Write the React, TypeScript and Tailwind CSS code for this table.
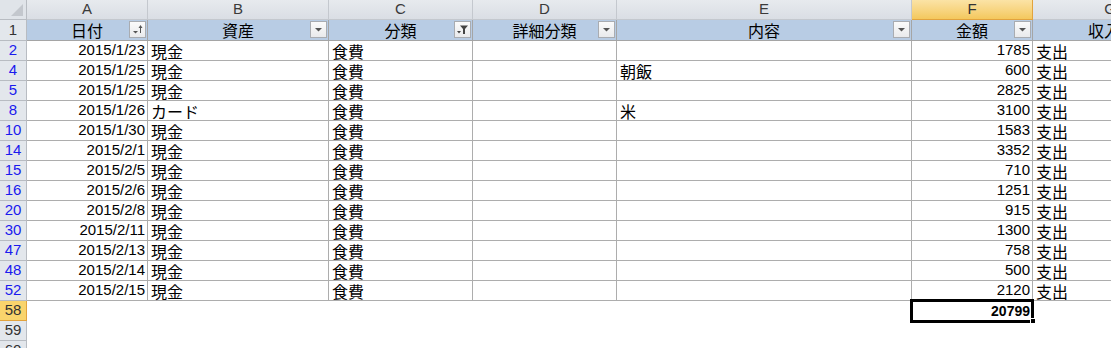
import React from 'react';

const COLS = 'grid grid-cols-[27px_121px_181px_144px_144px_295px_121px_1fr]';
const NUM = { fontFamily: '"Liberation Sans", Arial, sans-serif' };
const JP = { fontFamily: '"Noto Sans CJK JP", "Liberation Sans", sans-serif' };

type Row = { n: number; date: string; asset: string; cat: string; memo: string; amount: string };

const rows: Row[] = [
  { n: 2, date: '2015/1/23', asset: '現金', cat: '食費', memo: '', amount: '1785' },
  { n: 4, date: '2015/1/25', asset: '現金', cat: '食費', memo: '朝飯', amount: '600' },
  { n: 5, date: '2015/1/25', asset: '現金', cat: '食費', memo: '', amount: '2825' },
  { n: 8, date: '2015/1/26', asset: 'カード', cat: '食費', memo: '米', amount: '3100' },
  { n: 10, date: '2015/1/30', asset: '現金', cat: '食費', memo: '', amount: '1583' },
  { n: 14, date: '2015/2/1', asset: '現金', cat: '食費', memo: '', amount: '3352' },
  { n: 15, date: '2015/2/5', asset: '現金', cat: '食費', memo: '', amount: '710' },
  { n: 16, date: '2015/2/6', asset: '現金', cat: '食費', memo: '', amount: '1251' },
  { n: 20, date: '2015/2/8', asset: '現金', cat: '食費', memo: '', amount: '915' },
  { n: 30, date: '2015/2/11', asset: '現金', cat: '食費', memo: '', amount: '1300' },
  { n: 47, date: '2015/2/13', asset: '現金', cat: '食費', memo: '', amount: '758' },
  { n: 48, date: '2015/2/14', asset: '現金', cat: '食費', memo: '', amount: '500' },
  { n: 52, date: '2015/2/15', asset: '現金', cat: '食費', memo: '', amount: '2120' },
];

function FilterButton({ kind }: { kind: 'plain' | 'sort' | 'filter' }) {
  return (
    <div className="absolute right-[1px] top-[1px] w-[17px] h-[17px] border border-[#a9acb1] bg-gradient-to-b from-[#fbfbfb] to-[#e9eaec] flex items-center justify-center">
      <svg width="13" height="11" viewBox="0 0 13 11">
        {kind === 'plain' && <path d="M3 4 L10 4 L6.5 7.5 Z" fill="#555" />}
        {kind === 'sort' && (
          <g fill="#555">
            <path d="M2 7 L7 7 L4.5 9.5 Z" />
            <rect x="9" y="2" width="1" height="7" />
            <path d="M7.5 4 L9.5 1 L11.5 4 Z" />
          </g>
        )}
        {kind === 'filter' && (
          <g fill="#444">
            <path d="M1 7 L5 7 L3 9.5 Z" />
            <path d="M4 1.5 L12 1.5 L9 5 L9 10 L7 10 L7 5 Z" />
          </g>
        )}
      </svg>
    </div>
  );
}

function ColHead({ label, selected }: { label: string; selected?: boolean }) {
  return (
    <div
      className={
        selected
          ? 'h-5 flex items-center justify-center border-r border-b border-[#e2a33d] bg-gradient-to-b from-[#fbe3a5] to-[#f4c85c] text-[15px] text-[#333]'
          : 'h-5 flex items-center justify-center border-r border-b border-[#c4c8ce] bg-gradient-to-b from-[#e7eaee] to-[#dadee4] text-[15px] text-[#3a3a3a]'
      }
      style={NUM}
    >
      {label}
    </div>
  );
}

function TitleCell({ label, kind }: { label: string; kind: 'plain' | 'sort' | 'filter' | 'none' }) {
  return (
    <div className="relative h-[21px] bg-[#b8cce4] border-r border-b border-[#a5a5a5] flex items-center justify-center text-[16px] text-black leading-5" style={JP}>
      <span>{label}</span>
      {kind !== 'none' && <FilterButton kind={kind} />}
    </div>
  );
}

function RowHead({ n, blue, selected }: { n: number; blue?: boolean; selected?: boolean }) {
  return (
    <div
      className={
        selected
          ? 'h-5 flex items-center justify-center border-r border-b border-[#e2a33d] bg-[#f9d46c] text-[15px] text-[#333]'
          : `h-5 flex items-center justify-center border-r border-b border-[#b8bcc2] bg-[#e3e7ec] text-[15px] ${blue ? 'text-[#1a1aee]' : 'text-[#333]'}`
      }
      style={NUM}
    >
      {n}
    </div>
  );
}

export default function App() {
  return (
    <div className="w-[1111px] h-[348px] overflow-hidden bg-white select-none">
      {/* column letters */}
      <div className={COLS}>
        <div className="h-5 border-r border-b border-[#b8bcc2] bg-[#e0e4e9] relative">
          <div className="absolute right-[3px] bottom-[3px] w-0 h-0 border-l-[12px] border-l-transparent border-b-[12px] border-b-[#c3c7cd]" />
        </div>
        <ColHead label="A" />
        <ColHead label="B" />
        <ColHead label="C" />
        <ColHead label="D" />
        <ColHead label="E" />
        <ColHead label="F" selected />
        <div className="h-5 flex items-center justify-end border-b border-[#c4c8ce] bg-gradient-to-b from-[#e7eaee] to-[#dadee4] text-[15px] text-[#3a3a3a] overflow-hidden" style={NUM}>
          <span className="translate-x-[5px]">G</span>
        </div>
      </div>

      {/* table header row 1 */}
      <div className={COLS}>
        <div className="h-[21px] flex items-center justify-center border-r border-b border-[#b8bcc2] bg-[#e3e7ec] text-[15px] text-[#333]" style={NUM}>1</div>
        <TitleCell label="日付" kind="sort" />
        <TitleCell label="資産" kind="plain" />
        <TitleCell label="分類" kind="filter" />
        <TitleCell label="詳細分類" kind="plain" />
        <TitleCell label="内容" kind="plain" />
        <TitleCell label="金額" kind="plain" />
        <div className="h-[21px] bg-[#b8cce4] border-b border-[#a5a5a5] flex items-center justify-end text-[16px] text-black leading-5 overflow-hidden" style={JP}>
          <span className="translate-x-[9px]">収入</span>
        </div>
      </div>

      {/* data rows */}
      {rows.map((r) => (
        <div key={r.n} className={COLS}>
          <RowHead n={r.n} blue />
          <div className="h-5 border-r border-b border-[#adadad] flex items-center justify-end pr-[2px] text-[15px] text-black" style={NUM}>{r.date}</div>
          <div className="h-5 border-r border-b border-[#adadad] flex items-center pl-[3px] text-[16px] text-black leading-5" style={JP}>{r.asset}</div>
          <div className="h-5 border-r border-b border-[#adadad] flex items-center pl-[3px] text-[16px] text-black leading-5" style={JP}>{r.cat}</div>
          <div className="h-5 border-r border-b border-[#adadad]" />
          <div className="h-5 border-r border-b border-[#adadad] flex items-center pl-[3px] text-[16px] text-black leading-5" style={JP}>{r.memo}</div>
          <div className="h-5 border-r border-b border-[#adadad] flex items-center justify-end pr-[2px] text-[15px] text-black" style={NUM}>{r.amount}</div>
          <div className="h-5 border-b border-[#adadad] flex items-center pl-[3px] text-[16px] text-black leading-5" style={JP}>支出</div>
        </div>
      ))}

      {/* total row */}
      <div className={COLS}>
        <RowHead n={58} selected />
        <div className="h-5" />
        <div className="h-5" />
        <div className="h-5" />
        <div className="h-5" />
        <div className="h-5" />
        <div className="relative h-5 flex items-center justify-end pr-[3px] text-[14px] font-bold text-black" style={NUM}>
          20799
          <div className="absolute left-[-2px] top-[-2px] right-[-1px] bottom-[-2px] border-[3px] border-black" />
          <div className="absolute right-[-3px] bottom-[-3px] w-[6px] h-[6px] bg-black border border-white" />
        </div>
        <div className="h-5" />
      </div>

      <div className={COLS}>
        <RowHead n={59} />
      </div>
      <div className={COLS}>
        <RowHead n={60} />
      </div>
    </div>
  );
}
